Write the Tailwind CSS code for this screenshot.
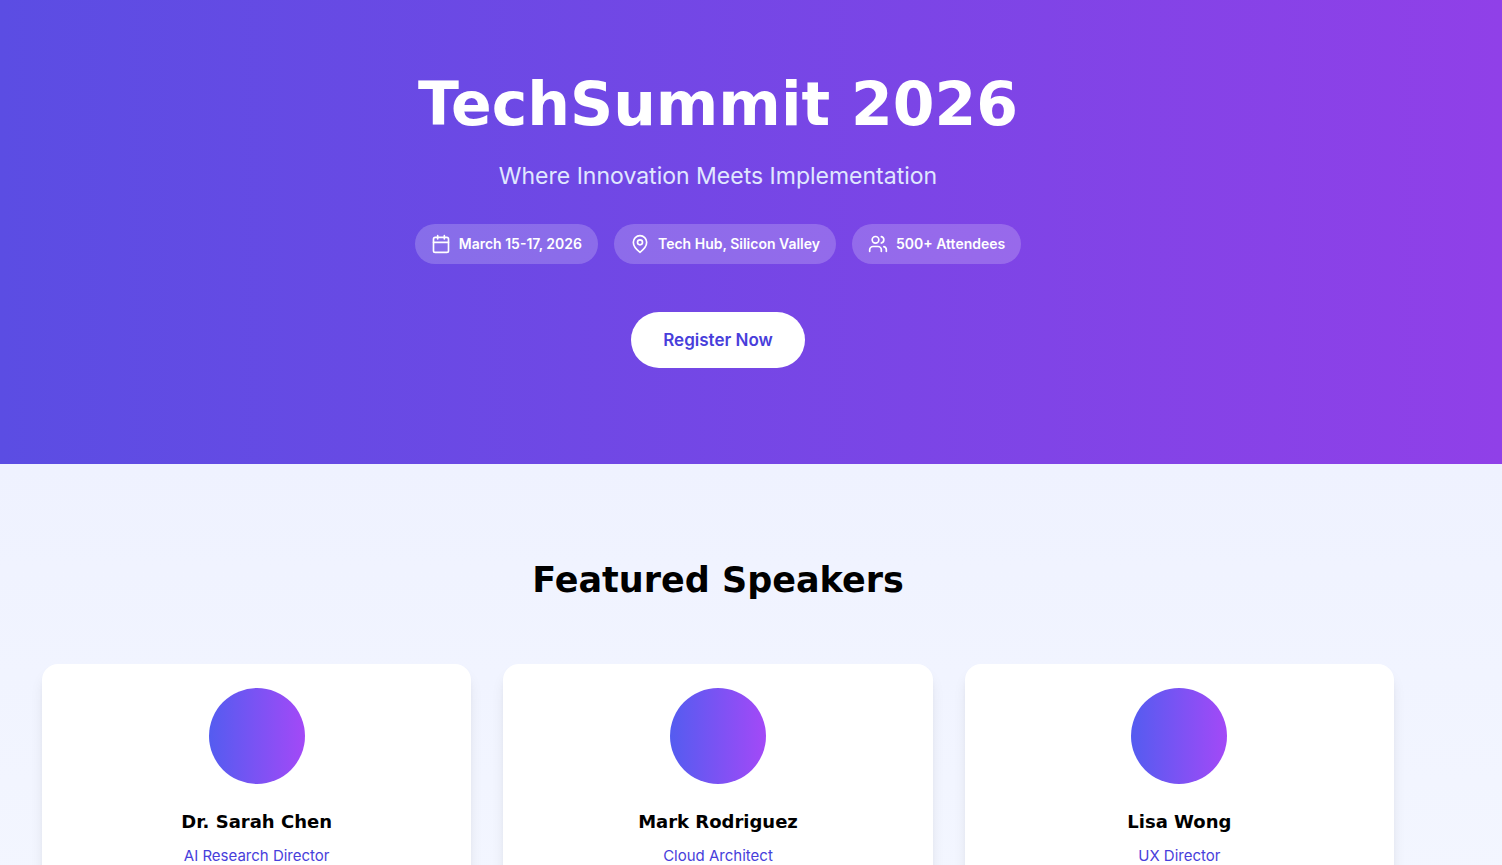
<!DOCTYPE html>
<html lang="en">

<head>
    <meta charset="UTF-8">
    <meta name="viewport" content="width=device-width, initial-scale=1.0">
    <script src="https://cdn.jsdelivr.net/npm/@tailwindcss/browser@4"></script>
    <title>TechSummit 2026</title>
</head>

<body class="min-h-screen overflow-x-hidden bg-[#f4f7ff] font-['Inter',sans-serif] text-black">
    <!-- Hero -->
    <header class="bg-linear-to-r/srgb from-[#5b4de3] to-[#9040e8] pt-16 pb-24 pr-[66px] text-white">
        <div class="flex flex-col items-center px-6 text-center">
            <h1 class="mb-4 font-['DejaVu_Sans',sans-serif] text-[60px] leading-[80px] font-bold">TechSummit 2026</h1>
            <p class="mb-8 text-[23px] leading-8 text-[#e0e7ff]">Where Innovation Meets Implementation</p>
            <ul class="mb-12 flex flex-wrap justify-center gap-4 text-[14px] leading-6 font-semibold">
                <li class="flex items-center gap-2 rounded-full bg-white/20 px-4 py-2">
                    <svg class="size-5" fill="none" viewBox="0 0 24 24" stroke="currentColor" stroke-width="2" stroke-linecap="round" stroke-linejoin="round">
                        <path d="M8 2v4M16 2v4M3 10h18" />
                        <rect x="3" y="4" width="18" height="18" rx="2" />
                    </svg>
                    March 15-17, 2026
                </li>
                <li class="flex items-center gap-2 rounded-full bg-white/20 px-4 py-2">
                    <svg class="size-5" fill="none" viewBox="0 0 24 24" stroke="currentColor" stroke-width="2" stroke-linecap="round" stroke-linejoin="round">
                        <path d="M20 10c0 6-8 12-8 12s-8-6-8-12a8 8 0 0 1 16 0Z" />
                        <circle cx="12" cy="10" r="3" />
                    </svg>
                    Tech Hub, Silicon Valley
                </li>
                <li class="flex items-center gap-2 rounded-full bg-white/20 px-4 py-2">
                    <svg class="size-5" fill="none" viewBox="0 0 24 24" stroke="currentColor" stroke-width="2" stroke-linecap="round" stroke-linejoin="round">
                        <path d="M16 21v-2a4 4 0 0 0-4-4H6a4 4 0 0 0-4 4v2" />
                        <circle cx="9" cy="7" r="4" />
                        <path d="M22 21v-2a4 4 0 0 0-3-3.87M16 3.13a4 4 0 0 1 0 7.75" />
                    </svg>
                    500+ Attendees
                </li>
            </ul>
            <button type="button" class="rounded-full bg-white px-8 py-4 text-[17px] leading-6 font-semibold text-[#483edb]">Register Now</button>
        </div>
    </header>

    <!-- Speakers -->
    <main class="bg-linear-to-b from-[#eff2ff] to-[#f4f7ff] py-24 pr-[66px]">
        <section class="mx-auto max-w-[1400px] px-6">
            <h2 class="mb-16 text-center font-['DejaVu_Sans',sans-serif] text-[35px] leading-10 font-bold">Featured Speakers</h2>
            <div class="grid gap-8 md:grid-cols-3">
                <article class="rounded-2xl bg-white p-6 text-center shadow-lg">
                    <div class="mx-auto mb-6 size-24 rounded-full bg-linear-to-r/srgb from-[#545cf0] to-[#a349f7]"></div>
                    <h3 class="mb-2 font-['DejaVu_Sans',sans-serif] text-[18px] leading-7 font-bold">Dr. Sarah Chen</h3>
                    <p class="text-[15px] leading-6 text-[#483edb]">AI Research Director</p>
                </article>
                <article class="rounded-2xl bg-white p-6 text-center shadow-lg">
                    <div class="mx-auto mb-6 size-24 rounded-full bg-linear-to-r/srgb from-[#545cf0] to-[#a349f7]"></div>
                    <h3 class="mb-2 font-['DejaVu_Sans',sans-serif] text-[18px] leading-7 font-bold">Mark Rodriguez</h3>
                    <p class="text-[15px] leading-6 text-[#483edb]">Cloud Architect</p>
                </article>
                <article class="rounded-2xl bg-white p-6 text-center shadow-lg">
                    <div class="mx-auto mb-6 size-24 rounded-full bg-linear-to-r/srgb from-[#545cf0] to-[#a349f7]"></div>
                    <h3 class="mb-2 font-['DejaVu_Sans',sans-serif] text-[18px] leading-7 font-bold">Lisa Wong</h3>
                    <p class="text-[15px] leading-6 text-[#483edb]">UX Director</p>
                </article>
            </div>
        </section>
    </main>
</body>

</html>
